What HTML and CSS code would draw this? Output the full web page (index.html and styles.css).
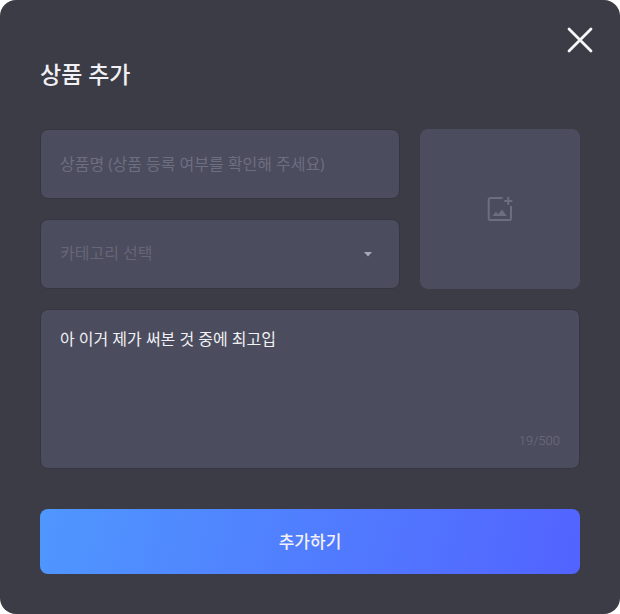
FILE: index.html
```html
<!DOCTYPE html>
<html lang="ko">
<head>
<meta charset="utf-8">
<meta name="viewport" content="width=device-width, initial-scale=1">
<title>상품 추가</title>
<link rel="stylesheet" href="styles.css">
</head>
<body>
<main class="modal" role="dialog" aria-labelledby="modal-title">
  <header class="modal-header">
    <h1 class="modal-title" id="modal-title">상품 추가</h1>
    <button class="close" type="button" aria-label="닫기">
      <svg width="40" height="40" viewBox="0 0 40 40" fill="none" stroke="#f7f7fa" stroke-width="2.8" stroke-linecap="round"><path d="M9 9l22 22M31 9L9 31"/></svg>
    </button>
  </header>
  <form class="form">
    <div class="product">
      <div class="fields">
        <input class="field" type="text" aria-label="상품명" placeholder="상품명 (상품 등록 여부를 확인해 주세요)">
        <div class="select-wrap">
          <select class="field select" aria-label="카테고리">
            <option value="">카테고리 선택</option>
          </select>
          <svg class="arrow" width="24" height="24" viewBox="0 0 24 24" fill="#a9a9b6"><path d="M8 10h8l-4 4.500z"/></svg>
        </div>
      </div>
      <button class="upload" type="button" aria-label="이미지 추가">
        <svg width="32" height="32" viewBox="0 0 32 32" fill="none" stroke="#6e6e82" stroke-width="2">
          <path d="M18.500 5H6.500Q4.700 5 4.700 6.800v18.400Q4.700 27 6.500 27h18.700q1.800 0 1.800-1.800V13"/>
          <path d="M24.300 4v8M20.300 8h8"/>
          <path d="M8.500 23l3.300-4.300 2.400 2.500 3.700-4.700L22.800 23z" fill="#6e6e82" stroke="none"/>
        </svg>
      </button>
    </div>
    <div class="review">
      <textarea class="review-text" aria-label="상품 리뷰" maxlength="500">아 이거 제가 써본 것 중에 최고입</textarea>
      <span class="count">19/500</span>
    </div>
    <button class="submit" type="submit">추가하기</button>
  </form>
</main>
</body>
</html>
```

FILE: styles.css
```css
* {
  box-sizing: border-box;
}

body {
  margin: 0;
  background: #fff;
  color: #f1f1f5;
  font-family: Lato, "Noto Sans CJK KR", sans-serif;
  font-size: 16px;
  line-height: 24px;
}

button,
input,
select,
textarea {
  font: inherit;
  color: inherit;
}

button {
  padding: 0;
  border: 0;
  cursor: pointer;
}

svg {
  display: block;
}

.modal {
  padding: 20px 20px 40px;
  border-radius: 16px;
  background: #3c3c46;
}

.modal-header {
  display: flex;
  justify-content: space-between;
  align-items: flex-start;
  padding-left: 20px;
}

.modal-title {
  margin: 36px 0 0;
  font-size: 23px;
  font-weight: 500;
  line-height: 36px;
}

.close {
  background: none;
}

.form {
  display: flex;
  flex-direction: column;
  padding: 37px 20px 0;
}

.product {
  display: flex;
  gap: 20px;
}

.fields {
  flex: 1;
  display: flex;
  flex-direction: column;
  gap: 20px;
  min-width: 0;
}

.field {
  display: block;
  width: 100%;
  height: 70px;
  padding: 0 19px 2px;
  border: 1px solid #363642;
  border-radius: 8px;
  background: #4b4c5d;
  appearance: none;
}

.field::placeholder {
  color: #6e6e82;
  opacity: 1;
}

.select-wrap {
  position: relative;
}

.select {
  color: #666678;
}

.arrow {
  position: absolute;
  top: 23px;
  right: 20px;
  pointer-events: none;
}

.upload {
  display: grid;
  place-items: center;
  width: 160px;
  border-radius: 8px;
  background: #4b4c5d;
}

.review {
  display: flex;
  flex-direction: column;
  height: 160px;
  margin: 20px 0 40px;
  padding: 17px 19px 15px;
  border: 1px solid #363642;
  border-radius: 8px;
  background: #4b4c5d;
}

.review-text {
  flex: 1;
  width: 100%;
  padding: 0;
  border: 0;
  background: none;
  resize: none;
}

.count {
  align-self: flex-end;
  color: #6e6e82;
  font-family: Roboto, sans-serif;
  font-size: 13px;
  font-weight: 300;
}

.submit {
  height: 65px;
  border-radius: 8px;
  background: linear-gradient(105deg, #4f97fe, #5263ff);
  font-weight: 500;
  font-size: 17px;
}
```
